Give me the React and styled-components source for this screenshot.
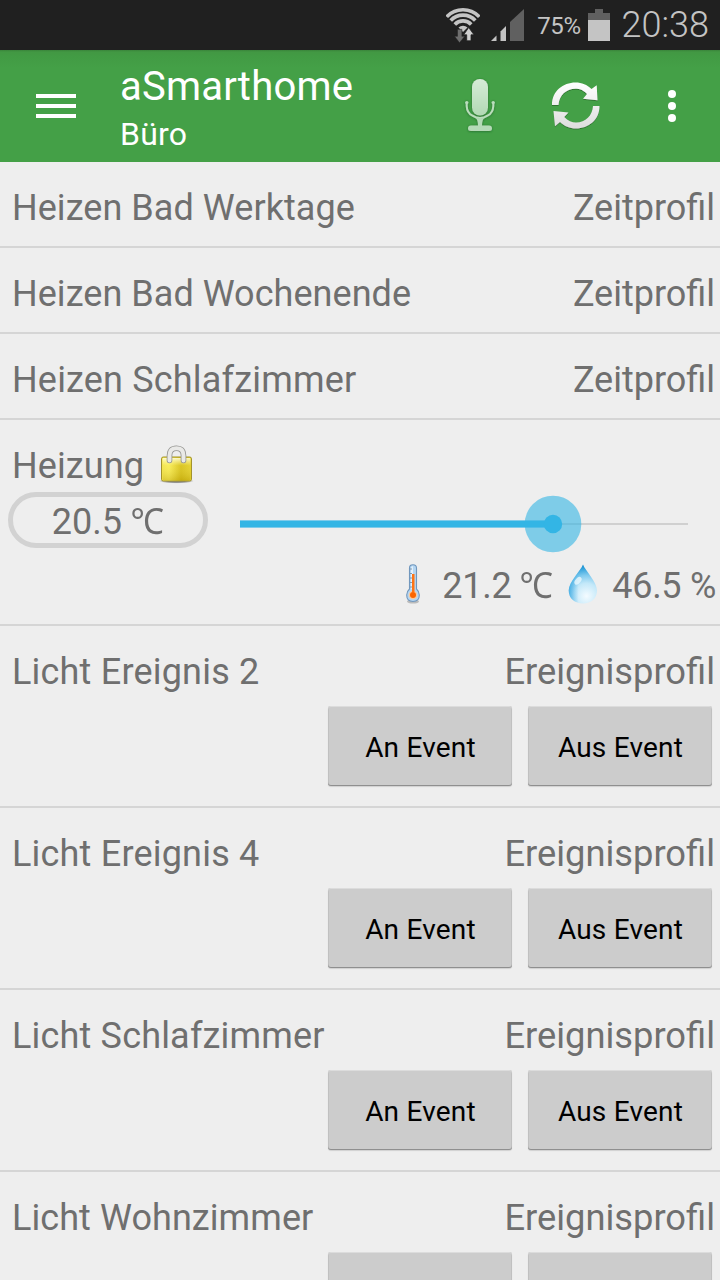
import React from "react";
import styled, { createGlobalStyle } from "styled-components";

const GlobalStyle = createGlobalStyle`
  * { box-sizing: border-box; }
  html, body { margin: 0; padding: 0; }
  body {
    width: 720px;
    height: 1280px;
    overflow: hidden;
    background: #eeeeee;
    font-family: Roboto, "Noto Sans", sans-serif;
  }
  svg { display: block; flex: none; }
`;

const Screen = styled.div`
  width: 720px;
  height: 1280px;
  overflow: hidden;
  display: flex;
  flex-direction: column;
  background: #eeeeee;
`;

const StatusBar = styled.div`
  flex: none;
  height: 50px;
  background: #202020;
  color: #c4c4c4;
  display: flex;
  align-items: center;
  justify-content: flex-end;
  padding-right: 11px;
`;

const Indicators = styled.div`
  display: flex;
  align-items: center;
  gap: 11px;
`;

const BatteryText = styled.span`
  font-size: 24px;
  line-height: 28px;
  letter-spacing: -0.4px;
  margin: 2px 7px 0 13px;
`;

const Clock = styled.span`
  font-size: 36px;
  line-height: 42px;
  font-weight: 300;
  margin-left: 12px;
`;

const AppBar = styled.header`
  flex: none;
  height: 112px;
  display: flex;
  align-items: center;
  background: linear-gradient(#39853a 0, #429843 2px, #429b44 6px, #44a047 18px);
  color: #ffffff;
`;

const MenuButton = styled.div`
  width: 112px;
  padding-left: 36px;
  display: flex;
  flex-direction: column;
  gap: 6px;
`;

const MenuLine = styled.span`
  width: 40px;
  height: 4px;
  background: #ffffff;
`;

const Titles = styled.div`
  flex: 1;
  padding: 7px 0 0 8px;
`;

const AppTitle = styled.div`
  font-size: 40px;
  line-height: 48px;
  letter-spacing: 0.2px;
`;

const AppSubtitle = styled.div`
  font-size: 32px;
  line-height: 46px;
  letter-spacing: 0.2px;
`;

const Action = styled.div`
  width: 96px;
  height: 112px;
  display: flex;
  align-items: center;
  justify-content: center;
`;

const Row = styled.section`
  flex: none;
  height: ${(p) => p.$height}px;
  padding-top: 25px;
  border-bottom: 2px solid #d5d5d5;
  color: #6f6f6f;
  font-size: 36px;
  line-height: 42px;
`;

const RowHead = styled.div`
  display: flex;
  justify-content: space-between;
  padding: 0 5px 0 12px;
  height: 42px;
`;

const Name = styled.span`
  white-space: nowrap;
  display: flex;
  gap: 14px;
  letter-spacing: ${(p) => p.$spacing || 0}px;
`;

const Kind = styled.span`
  white-space: nowrap;
  font-size: ${(p) => p.$size || 36}px;
`;

const Buttons = styled.div`
  display: flex;
  justify-content: flex-end;
  gap: 16px;
  padding: 13px 8px 0 0;
`;

const EventButton = styled.button`
  width: 184px;
  height: 80px;
  border: 0;
  border-radius: 3px;
  background: #cccccc;
  box-shadow: inset 0 1px 0 #dcdcdc, inset 0 -1px 0 #8f8f8f, inset 1px 0 0 #c0c0c0,
    inset -1px 0 0 #c0c0c0, 0 1px 1px #d0d0d0;
  color: #000000;
  font: 28px/32px Roboto, sans-serif;
  letter-spacing: 0.2px;
  padding: 3px 0 0 1px;
`;

const Control = styled.div`
  display: flex;
  align-items: center;
  height: 56px;
  margin-top: 5px;
  padding-left: 8px;
`;

const ValuePill = styled.div`
  width: 200px;
  height: 56px;
  border: 5px solid #d2d2d2;
  border-radius: 28px;
  display: flex;
  align-items: center;
  justify-content: center;
  padding-top: 2px;
`;

const SliderDrawing = styled.svg`
  margin: 8px 0 0 20px;
`;

const Readings = styled.div`
  display: flex;
  justify-content: flex-end;
  align-items: center;
  height: 42px;
  margin-top: 15px;
  padding-right: 4px;
`;

const Reading = styled.span`
  white-space: nowrap;
  padding-top: 3px;
  letter-spacing: -0.3px;
  margin: ${(p) => p.$margin};
`;

const Unit = styled.span`
  display: inline-block;
  font-family: "Noto Sans", "Noto Sans CJK JP", sans-serif;
  line-height: 42px;
  letter-spacing: 0;
  margin-left: -2.5px;
  transform: scaleX(0.93);
  transform-origin: right center;
`;

const WifiIcon = () => (
  <svg width="34" height="36" viewBox="0 0 34 36">
    <g fill="none" stroke="#c4c4c4" strokeWidth="3.6">
      <path d="M0.700 9.800A22.300 22.300 0 0 1 33.300 9.800" />
      <path d="M4.700 13.500A16.800 16.800 0 0 1 29.300 13.500" />
      <path d="M8.800 17.400A11.200 11.200 0 0 1 25.200 17.400" />
    </g>
    <path d="M12.500 20.600A6.500 6.500 0 0 1 21.500 20.600L17 25Z" fill="#c4c4c4" />
    <path d="M11.500 22.300h4.400v7h2.900L13.500 35.700 8.500 29.300h3z" fill="#6e6e6e" stroke="#202020" strokeWidth="0.500" />
    <path d="M20.700 33.800v-6h-3L22.700 20.500l5.300 7.300h-3v6z" fill="#d0d0d0" stroke="#202020" strokeWidth="0.800" />
  </svg>
);

const SignalIcon = () => (
  <svg width="33" height="32" viewBox="0 0 33 32">
    <path d="M0 32 L5.500 26.500V32z" fill="#c4c4c4" />
    <path d="M9.500 32V22.500L15 17V32z" fill="#c4c4c4" />
    <path d="M19 32V13L33 0V32z" fill="#606060" />
  </svg>
);

const BatteryIcon = () => (
  <svg width="22" height="32" viewBox="0 0 22 32">
    <path d="M7 0h8v4h7v7H0V4h7z" fill="#606060" />
    <path d="M0 11h22v21H0z" fill="#c4c4c4" />
  </svg>
);

const MicIcon = () => (
  <svg width="36" height="60" viewBox="0 0 36 60">
    <defs>
      <linearGradient id="mic" x1="0" y1="0" x2="0" y2="1">
        <stop offset="0" stopColor="#d6ebd7" />
        <stop offset="1" stopColor="#b2d9b4" />
      </linearGradient>
      <filter id="micGlow" x="-30%" y="-20%" width="160%" height="140%">
        <feDropShadow dx="0" dy="0.500" stdDeviation="1.200" floodColor="#1c5a20" floodOpacity="0.750" />
      </filter>
    </defs>
    <g filter="url(#micGlow)">
      <rect x="10" y="3" width="16" height="36.500" rx="8" fill="url(#mic)" />
      <path d="M4.700 26.500V30Q5 37 10.500 39.700Q18 44.500 25.500 39.700Q31 37 31.300 30V26.500" fill="none" stroke="#badebc" strokeWidth="2" />
      <circle cx="4.800" cy="26.500" r="1.600" fill="#badebc" />
      <circle cx="31.200" cy="26.500" r="1.600" fill="#badebc" />
      <path d="M13.500 41.500Q18 43.500 22.500 41.500Q20 44 20 49.500H27Q30 49.700 30 52.500Q30 55 27 55H9Q6 55 6 52.500Q6 49.700 9 49.500H16Q16 44 13.500 41.500Z" fill="#b5dab7" />
    </g>
  </svg>
);

const RefreshIcon = () => (
  <svg width="52" height="52" viewBox="0 0 52 52">
    <defs>
      <linearGradient id="sync" x1="0" y1="0" x2="0" y2="1">
        <stop offset="0" stopColor="#ffffff" />
        <stop offset="1" stopColor="#dddddd" />
      </linearGradient>
      <filter id="syncShadow" x="-10%" y="-10%" width="120%" height="130%">
        <feDropShadow dx="0" dy="1" stdDeviation="0.600" floodColor="#245b27" floodOpacity="0.650" />
      </filter>
    </defs>
    <path
      d="M2 25C2 11 13 2.500 25.500 2.500C32 2.500 37 4.800 41.500 9L46.700 5.300L47.500 20.300L33 18.800L37 14C33 9.700 29.500 8.700 25.500 8.700C16 8.700 9 15.500 8.500 25Z
         M49.500 26C49.500 40 38.500 48.500 26 48.500C19.500 48.500 14.500 46.200 10 42L5 46.300L3.500 31L18.500 32.500L14.200 37C18 41 22 42.500 26 42.500C35.500 42.500 42.500 35.500 43 26Z"
      fill="url(#sync)"
      filter="url(#syncShadow)"
    />
  </svg>
);

const MoreIcon = () => (
  <svg width="8" height="32" viewBox="0 0 8 32">
    <circle cx="4" cy="4" r="4" fill="#fff" />
    <circle cx="4" cy="16" r="4" fill="#fff" />
    <circle cx="4" cy="28" r="4" fill="#fff" />
  </svg>
);

const LockIcon = () => (
  <svg width="36" height="40" viewBox="0 0 36 40">
    <defs>
      <linearGradient id="lockBody" x1="0" y1="0" x2="1" y2="0">
        <stop offset="0" stopColor="#f2e34a" />
        <stop offset="0.250" stopColor="#f8ec54" />
        <stop offset="0.650" stopColor="#d6bf16" />
        <stop offset="1" stopColor="#e4d02c" />
      </linearGradient>
      <linearGradient id="lockShade" x1="0" y1="0" x2="0" y2="1">
        <stop offset="0" stopColor="#fffde0" stopOpacity="0.900" />
        <stop offset="0.350" stopColor="#fff9a0" stopOpacity="0.100" />
        <stop offset="1" stopColor="#a88a00" stopOpacity="0.300" />
      </linearGradient>
      <radialGradient id="lockShadow">
        <stop offset="0.500" stopColor="#555" stopOpacity="0.700" />
        <stop offset="1" stopColor="#555" stopOpacity="0" />
      </radialGradient>
    </defs>
    <ellipse cx="18.500" cy="36" rx="17.500" ry="2.600" fill="url(#lockShadow)" />
    <rect x="3.500" y="12" width="30" height="24" rx="1.800" fill="url(#lockBody)" stroke="#a3932c" />
    <rect x="4.500" y="13" width="28" height="22" rx="1" fill="url(#lockShade)" />
    <path d="M11.500 15.500V10.500Q11.500 3.200 18.500 3.200T25.500 10.500V15.500" fill="none" stroke="#92928f" strokeWidth="5.600" strokeLinecap="round" />
    <path d="M11.500 15.500V10.500Q11.500 3.200 18.500 3.200T25.500 10.500V15.500" fill="none" stroke="#e9e9e7" strokeWidth="4" strokeLinecap="round" />
  </svg>
);

const ThermometerIcon = () => (
  <svg width="14" height="40" viewBox="0 0 14 40">
    <ellipse cx="7" cy="37.500" rx="6" ry="2" fill="#888" opacity="0.500" />
    <path d="M3.500 25V4Q3.500 0.700 7 0.700T10.500 4V25Q13.300 27.500 13.300 31Q13.300 37.500 7 37.500T0.700 31Q0.700 27.500 3.500 25Z" fill="#b5d6f2" stroke="#7197bd" strokeWidth="1.100" />
    <path d="M5 25V4.500Q5 2 7 2V26Z" fill="#e3f1fc" />
    <circle cx="7" cy="31" r="4.300" fill="#fbc99a" />
    <path d="M6 10h2.500V28H6z" fill="#ff7414" />
    <circle cx="7" cy="31" r="3" fill="#fb6500" />
    <path d="M4 5h2M4 9.500h2M4 14h2M4 18.500h2M4 23h2" stroke="#7d8fa3" strokeWidth="0.900" />
  </svg>
);

const DropIcon = () => (
  <svg width="30" height="40" viewBox="0 0 30 40">
    <defs>
      <radialGradient id="drop" gradientUnits="userSpaceOnUse" cx="18.500" cy="32" r="32">
        <stop offset="0" stopColor="#f4fbff" />
        <stop offset="0.400" stopColor="#c3e8f9" />
        <stop offset="0.650" stopColor="#7fcaee" />
        <stop offset="0.880" stopColor="#2c9fda" />
        <stop offset="1" stopColor="#0c83c8" />
      </radialGradient>
      <linearGradient id="dropEdge" x1="0" y1="0" x2="1" y2="0">
        <stop offset="0" stopColor="#1d9bdc" stopOpacity="0.600" />
        <stop offset="0.350" stopColor="#1d9bdc" stopOpacity="0" />
      </linearGradient>
    </defs>
    <path d="M15 0.500C17.500 7 29 18 29 26.500C29 34.500 23 39.500 15 39.500S0.700 34.500 0.700 26.500C0.700 18 12.500 7 15 0.500Z" fill="url(#drop)" />
    <path d="M15 0.500C17.500 7 29 18 29 26.500C29 34.500 23 39.500 15 39.500S0.700 34.500 0.700 26.500C0.700 18 12.500 7 15 0.500Z" fill="url(#dropEdge)" />
    <ellipse cx="10" cy="16.800" rx="4.500" ry="2.600" transform="rotate(-48 10 16.800)" fill="#e9f7fe" opacity="0.800" />
  </svg>
);

const Slider = () => (
  <SliderDrawing width="480" height="58" viewBox="0 0 480 58">
    <path d="M12 29H460" stroke="#d0d0d0" strokeWidth="2" />
    <path d="M12 29H325" stroke="#7fcbea" strokeWidth="8" />
    <path d="M12 29H325" stroke="#33b5e5" strokeWidth="6" />
    <circle cx="325" cy="29" r="28.300" fill="#33b5e5" fillOpacity="0.600" />
    <circle cx="325" cy="29" r="9.200" fill="#33b5e5" />
  </SliderDrawing>
);

const EventRow = ({ name, spacing, labels = ["An Event", "Aus Event"] }) => (
  <Row $height={182}>
    <RowHead>
      <Name $spacing={spacing}>{name}</Name>
      <Kind $size={36.3}>Ereignisprofil</Kind>
    </RowHead>
    <Buttons>
      <EventButton>{labels[0]}</EventButton>
      <EventButton>{labels[1]}</EventButton>
    </Buttons>
  </Row>
);

const timeProfiles = [
  { name: "Heizen Bad Werktage", spacing: 0.05 },
  { name: "Heizen Bad Wochenende", spacing: 0.04 },
  { name: "Heizen Schlafzimmer", spacing: 0.18 },
];

const eventProfiles = [
  { name: "Licht Ereignis 2", spacing: 0.2 },
  { name: "Licht Ereignis 4", spacing: 0.2 },
  { name: "Licht Schlafzimmer", spacing: 0.18 },
  { name: "Licht Wohnzimmer", spacing: 0.07, labels: [] },
];

export default function App() {
  return (
    <Screen>
      <GlobalStyle />
      <StatusBar>
        <Indicators>
          <WifiIcon />
          <SignalIcon />
        </Indicators>
        <BatteryText>75%</BatteryText>
        <BatteryIcon />
        <Clock>20:38</Clock>
      </StatusBar>
      <AppBar>
        <MenuButton>
          <MenuLine />
          <MenuLine />
          <MenuLine />
        </MenuButton>
        <Titles>
          <AppTitle>aSmarthome</AppTitle>
          <AppSubtitle>Büro</AppSubtitle>
        </Titles>
        <Action><MicIcon /></Action>
        <Action><RefreshIcon /></Action>
        <Action><MoreIcon /></Action>
      </AppBar>
      {timeProfiles.map(({ name, spacing }) => (
        <Row key={name} $height={86}>
          <RowHead>
            <Name $spacing={spacing}>{name}</Name>
            <Kind>Zeitprofil</Kind>
          </RowHead>
        </Row>
      ))}
      <Row $height={206}>
        <RowHead>
          <Name $spacing={0.1}>Heizung <LockIcon /></Name>
        </RowHead>
        <Control>
          <ValuePill><span>20.5 <Unit>℃</Unit></span></ValuePill>
          <Slider />
        </Control>
        <Readings>
          <ThermometerIcon />
          <Reading $margin="0 15px 0 22px">21.2 <Unit>℃</Unit></Reading>
          <DropIcon />
          <Reading $margin="0 0 0 14px">46.5 %</Reading>
        </Readings>
      </Row>
      {eventProfiles.map((profile) => (
        <EventRow key={profile.name} {...profile} />
      ))}
    </Screen>
  );
}
